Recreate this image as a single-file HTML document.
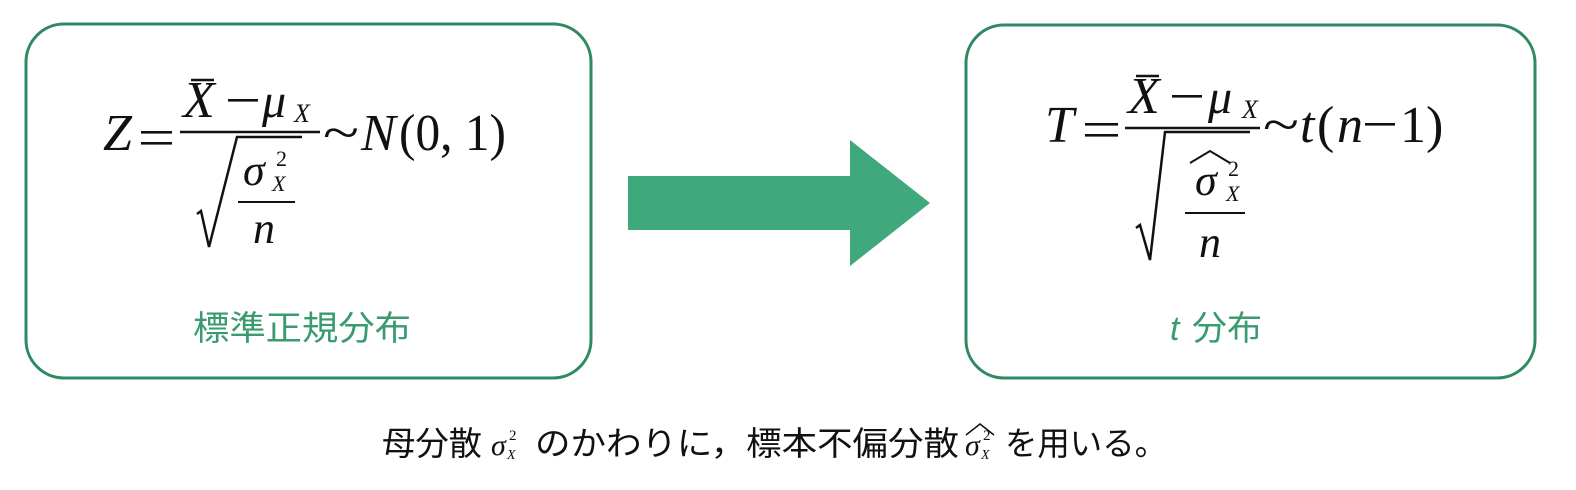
<!DOCTYPE html>
<html><head><meta charset="utf-8"><style>
html,body{margin:0;padding:0;background:#fff;}
svg{display:block}
.m{font-family:"Liberation Serif",serif;fill:#111}
.i{font-style:italic}
.g{font-family:"Liberation Sans","Noto Sans CJK JP",sans-serif;fill:#3a9a70}
.c{font-family:"Liberation Sans","Noto Sans CJK JP",sans-serif;fill:#111}
</style></head><body>
<svg width="1576" height="490" viewBox="0 0 1576 490">
<rect x="26" y="24" width="565" height="354" rx="38" fill="none" stroke="#2f8a62" stroke-width="3"/>
<rect x="966" y="25" width="569" height="353" rx="38" fill="none" stroke="#2f8a62" stroke-width="3"/>
<polygon points="628,176 850,176 850,140 930,203 850,266 850,230 628,230" fill="#3fa87c"/>

<!-- left formula -->
<text class="m i" x="103" y="150" font-size="52">Z</text>
<rect x="141" y="131" width="31" height="2.6" fill="#111"/>
<rect x="141" y="142" width="31" height="2.6" fill="#111"/>
<text class="m i" x="183" y="117" font-size="52">X</text>
<line x1="191" y1="80" x2="214" y2="80" stroke="#111" stroke-width="2.5"/>
<rect x="228" y="99" width="30" height="2.6" fill="#111"/>
<text class="m i" x="262" y="117" font-size="48">μ</text>
<text class="m i" x="294" y="122" font-size="26">X</text>
<line x1="180" y1="132" x2="320" y2="132" stroke="#111" stroke-width="2.5"/>
<polyline points="197,214 201,211 209,247 237,137 302,137" fill="none" stroke="#111" stroke-width="2.5"/>
<text class="m i" x="243" y="185" font-size="44">σ</text>
<text class="m" x="276" y="166" font-size="22">2</text>
<text class="m i" x="272" y="191" font-size="22">X</text>
<line x1="238" y1="202" x2="295" y2="202" stroke="#111" stroke-width="2"/>
<text class="m i" x="253" y="243" font-size="44">n</text>
<text class="m" x="323" y="150" font-size="52" textLength="36" lengthAdjust="spacingAndGlyphs">~</text>
<text class="m i" x="361" y="150" font-size="52">N</text>
<text class="m" x="399" y="150" font-size="52" textLength="107" lengthAdjust="spacingAndGlyphs">(0, 1)</text>
<text class="g" x="193" y="340" font-size="34" textLength="218" lengthAdjust="spacingAndGlyphs">標準正規分布</text>

<!-- right formula -->
<text class="m i" x="1045" y="142" font-size="52">T</text>
<rect x="1085" y="123" width="33" height="2.6" fill="#111"/>
<rect x="1085" y="134" width="33" height="2.6" fill="#111"/>
<text class="m i" x="1128" y="113" font-size="52">X</text>
<line x1="1136" y1="76" x2="1159" y2="76" stroke="#111" stroke-width="2.5"/>
<rect x="1172" y="95" width="30" height="2.6" fill="#111"/>
<text class="m i" x="1208" y="113" font-size="48">μ</text>
<text class="m i" x="1242" y="118" font-size="26">X</text>
<line x1="1125" y1="128" x2="1260" y2="128" stroke="#111" stroke-width="2.5"/>
<polyline points="1136,228 1140,225 1150,260 1165,132 1250,132" fill="none" stroke="#111" stroke-width="2.5"/>
<polyline points="1190,163 1210,151 1230,163" fill="none" stroke="#111" stroke-width="2"/>
<text class="m i" x="1195" y="195" font-size="44">σ</text>
<text class="m" x="1228" y="176" font-size="22">2</text>
<text class="m i" x="1226" y="201" font-size="22">X</text>
<line x1="1185" y1="213" x2="1245" y2="213" stroke="#111" stroke-width="2"/>
<text class="m i" x="1199" y="257" font-size="44">n</text>
<text class="m" x="1263" y="142" font-size="52" textLength="36" lengthAdjust="spacingAndGlyphs">~</text>
<text class="m i" x="1300" y="142" font-size="52">t</text>
<text class="m" x="1317" y="142" font-size="52">(</text>
<text class="m i" x="1337" y="142" font-size="52">n</text>
<rect x="1365" y="123" width="30" height="2.6" fill="#111"/>
<text class="m" x="1400" y="142" font-size="52">1)</text>
<text class="g i" x="1170" y="340" font-size="34" style="font-family:'Liberation Sans',sans-serif">t</text>
<text class="g" x="1192" y="340" font-size="34" textLength="70" lengthAdjust="spacingAndGlyphs">分布</text>

<!-- caption -->
<text class="c" x="382" y="455" font-size="33" textLength="100" lengthAdjust="spacingAndGlyphs">母分散</text>
<text class="m i" x="491" y="455" font-size="30">σ</text>
<text class="m" x="509" y="440" font-size="15">2</text>
<text class="m i" x="507" y="459" font-size="14">X</text>
<text class="c" x="535" y="455" font-size="33" textLength="424" lengthAdjust="spacingAndGlyphs">のかわりに，標本不偏分散</text>
<polyline points="966,435 980,424 994,435" fill="none" stroke="#111" stroke-width="1.5"/>
<text class="m i" x="965" y="455" font-size="30">σ</text>
<text class="m" x="983" y="440" font-size="15">2</text>
<text class="m i" x="981" y="459" font-size="14">X</text>
<text class="c" x="1005" y="455" font-size="33" textLength="162" lengthAdjust="spacingAndGlyphs">を用いる。</text>
</svg>
</body></html>
